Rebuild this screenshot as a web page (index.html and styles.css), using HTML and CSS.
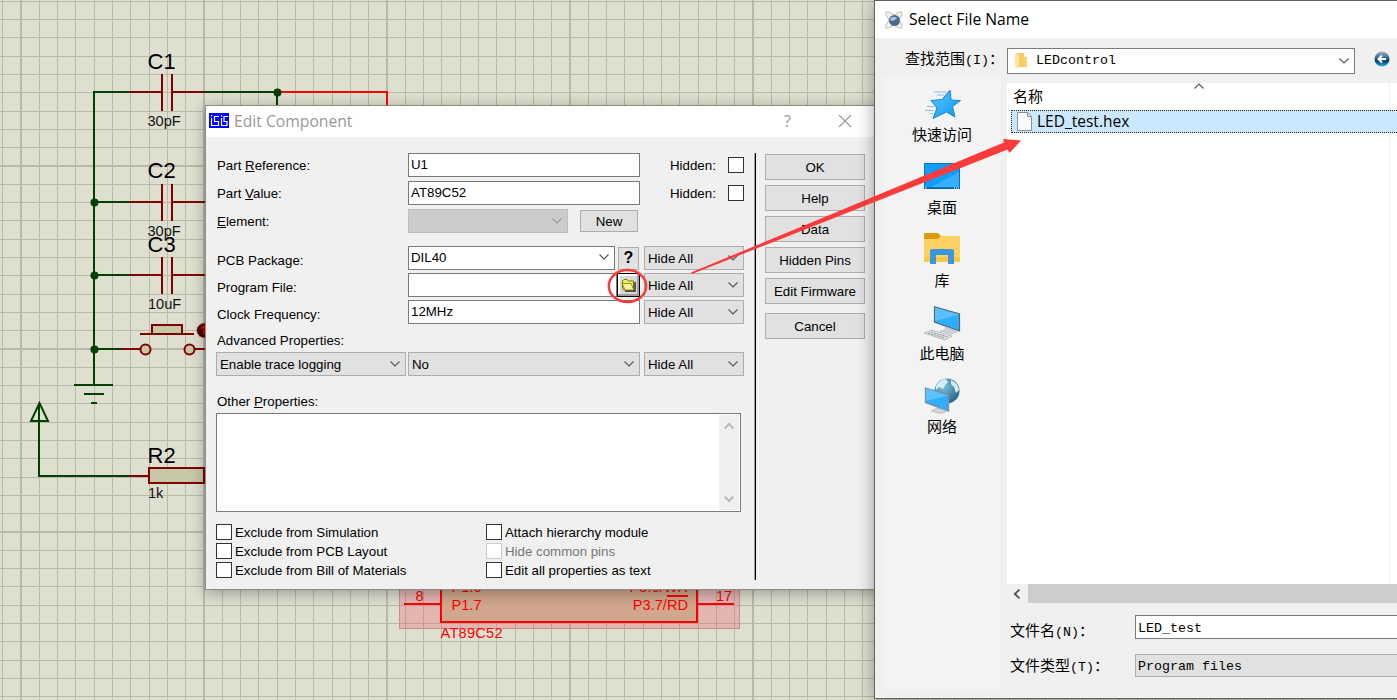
FILE: index.html
```html
<!DOCTYPE html>
<html lang="en">
<head>
  <meta charset="UTF-8" />
  <meta name="viewport" content="width=device-width, initial-scale=1" />
  <title>Edit Component</title>
  <link rel="stylesheet" href="styles.css">
</head>
<body>
  <div class="desktop">
    <svg class="schematic" width="1397" height="700" viewBox="0 0 1397 700">
      <defs>
        <pattern id="grid" x="21" y="166" width="183" height="183" patternUnits="userSpaceOnUse">
          <g fill="#b9b9a9" shape-rendering="crispEdges">
            <path d="M0 0h1v183h-1zM18 0h1v183h-1zM36 0h1v183h-1zM54 0h1v183h-1zM73 0h1v183h-1zM91 0h1v183h-1zM109 0h1v183h-1zM128 0h1v183h-1zM146 0h1v183h-1zM164 0h1v183h-1zM182 0h1v183h-1z" />
            <path d="M0 0h183v1h-183zM0 18h183v1h-183zM0 36h183v1h-183zM0 54h183v1h-183zM0 73h183v1h-183zM0 91h183v1h-183zM0 109h183v1h-183zM0 128h183v1h-183zM0 146h183v1h-183zM0 164h183v1h-183zM0 182h183v1h-183z" />
          </g>
        </pattern>
      </defs>
      <rect width="1397" height="700" fill="#dfdfd0" />
      <rect width="1397" height="700" fill="url(#grid)" />

      <!-- wires -->
      <g class="wire">
        <path d="M130 92H94V385M94 202H130M94 275H130M94 349H121M204 92H277V110" />
        <path d="M74 385H113M84 394H104M91 403H97" />
        <path d="M39 404V476H130M39.5 403L31 421H48Z" />
      </g>
      <g fill="#004000">
        <circle cx="94.500" cy="202.500" r="4" />
        <circle cx="94.500" cy="275.500" r="4" />
        <circle cx="94.500" cy="349.500" r="4" />
        <circle cx="277.500" cy="92.500" r="4" />
      </g>
      <path class="wire active" d="M281 92H387V110" />

      <!-- parts -->
      <g class="part">
        <path d="M129 92H162M172 92H205M162 74V111M172 74V111" />
        <path d="M129 202H162M172 202H205M162 184V221M172 184V221" />
        <path d="M129 275H162M172 275H205M162 257V294M172 257V294" />
        <path d="M121 349H141M194 349H206M140 334H194" />
        <rect x="152" y="325" width="30" height="9" />
        <circle cx="145.500" cy="349.500" r="5" />
        <circle cx="189.500" cy="349.500" r="5" />
        <path d="M129 476H149M204 476H206" />
        <rect x="149" y="468" width="55" height="15" />
      </g>
      <circle cx="204" cy="330.500" r="7" fill="#3a0000" stroke="#d00000" stroke-dasharray="1.500 1.500" />
      <path d="M204 335V327M201 329L204 326L207 329" fill="none" stroke="#f00" stroke-width="1.500" />
      <g class="name">
        <text x="147.500" y="69">C1</text>
        <text x="147.500" y="178">C2</text>
        <text x="147.500" y="252">C3</text>
        <text x="147.500" y="463">R2</text>
      </g>
      <g class="value">
        <text x="147.500" y="126">30pF</text>
        <text x="147.500" y="236">30pF</text>
        <text x="148" y="309">10uF</text>
        <text x="148" y="498">1k</text>
      </g>

      <!-- selected chip -->
      <rect x="399.500" y="400.500" width="340" height="228" fill="#f05a6e" fill-opacity=".3" stroke="#c98f86" />
      <rect x="441" y="400" width="256" height="222" fill="#d1a78d" stroke="#f00" stroke-width="2" />
      <path class="wire active" d="M404 604H441M697 604H734M667 596H688" />
      <g class="value pin">
        <text x="415.500" y="601">8</text>
        <text x="716" y="601">17</text>
        <text x="451.500" y="592">P1.6</text>
        <text x="451.500" y="610">P1.7</text>
        <text x="688" y="592" text-anchor="end">P3.6/WR</text>
        <text x="688" y="610" text-anchor="end">P3.7/RD</text>
        <text x="440.500" y="638" textLength="62">AT89C52</text>
      </g>
    </svg>

    <section class="window edit-window">
      <header class="titlebar">
        <svg class="isis-icon" width="20" height="15" viewBox="0 0 20 15">
          <rect width="20" height="15" fill="#00f" />
          <path d="M2.500 2V3.500M2.500 5V12.500H9.500V8.500H5.500V3.500H10M12.500 2V3.500M12.500 5V12.500H18V8.500H15V3.500H19" fill="none" stroke="#fff" stroke-width="1.200" />
        </svg>
        <h1>Edit Component</h1>
        <span class="help-mark">?</span>
        <svg class="close" width="14" height="14" viewBox="0 0 14 14"><path d="M1 1L13 13M13 1L1 13" fill="none" stroke="#999" stroke-width="1.100" /></svg>
      </header>

      <div class="edit-body">
        <form class="fields">
          <div class="row">
            <label>Part <u>R</u>eference:</label>
            <div class="input w-full">U1</div>
            <span class="hidden-label">Hidden:</span><i class="box"></i>
          </div>
          <div class="row">
            <label>Part <u>V</u>alue:</label>
            <div class="input w-full">AT89C52</div>
            <span class="hidden-label">Hidden:</span><i class="box"></i>
          </div>
          <div class="row element-row">
            <label><u>E</u>lement:</label>
            <div class="select w-element disabled"><svg class="chev" viewBox="0 0 10 6"><path d="M.5 .5L5 5L9.500 .5" /></svg></div>
            <div class="button new-button">New</div>
          </div>
          <div class="row low">
            <label>PCB Package:</label>
            <div class="input w-package">DIL40<svg class="chev" viewBox="0 0 10 6"><path d="M.5 .5L5 5L9.500 .5" /></svg></div>
            <div class="button query-button">?</div>
            <div class="select w-hide">Hide All<svg class="chev" viewBox="0 0 10 6"><path d="M.5 .5L5 5L9.500 .5" /></svg></div>
          </div>
          <div class="row low">
            <label>Program File:</label>
            <div class="input w-file"></div>
            <div class="folder-button">
              <svg width="16" height="14" viewBox="0 0 16 14">
                <path d="M4 13H14V4" fill="none" stroke="#222" stroke-width="1.400" />
                <path d="M1.500 10V3L3 1.500H6L7.500 3H12.500V12H3Z" fill="#f2ee52" stroke="#77770a" />
                <path d="M1 5.500H10L13 12H4Z" fill="#fbf09a" stroke="#77770a" stroke-width=".8" />
              </svg>
            </div>
            <div class="select w-hide">Hide All<svg class="chev" viewBox="0 0 10 6"><path d="M.5 .5L5 5L9.500 .5" /></svg></div>
          </div>
          <div class="row low">
            <label>Clock Frequency:</label>
            <div class="input w-full">12MHz</div>
            <div class="select w-hide">Hide All<svg class="chev" viewBox="0 0 10 6"><path d="M.5 .5L5 5L9.500 .5" /></svg></div>
          </div>
          <div class="caption">Advanced Properties:</div>
          <div class="row advanced">
            <div class="select w-name">Enable trace logging<svg class="chev" viewBox="0 0 10 6"><path d="M.5 .5L5 5L9.500 .5" /></svg></div>
            <div class="select w-full">No<svg class="chev" viewBox="0 0 10 6"><path d="M.5 .5L5 5L9.500 .5" /></svg></div>
            <div class="select w-hide">Hide All<svg class="chev" viewBox="0 0 10 6"><path d="M.5 .5L5 5L9.500 .5" /></svg></div>
          </div>
          <div class="caption other">Other <u>P</u>roperties:</div>
          <div class="textarea">
            <div class="scrollbar">
              <svg width="10" height="8" viewBox="0 0 10 8"><path d="M.7 6.500L5 2L9.300 6.500" /></svg>
              <svg width="10" height="8" viewBox="0 0 10 8"><path d="M.7 1.500L5 6L9.300 1.500" /></svg>
            </div>
          </div>
          <div class="checks">
            <div class="check"><i class="box"></i>Exclude from Simulation</div>
            <div class="check"><i class="box"></i>Attach hierarchy module</div>
            <div class="check"><i class="box"></i>Exclude from PCB Layout</div>
            <div class="check off"><i class="box"></i>Hide common pins</div>
            <div class="check"><i class="box"></i>Exclude from Bill of Materials</div>
            <div class="check"><i class="box"></i>Edit all properties as text</div>
          </div>
        </form>
        <div class="divider"></div>
        <div class="actions">
          <div class="button">OK</div>
          <div class="button">Help</div>
          <div class="button">Data</div>
          <div class="button">Hidden Pins</div>
          <div class="button">Edit Firmware</div>
          <div class="button cancel">Cancel</div>
        </div>
      </div>
    </section>

    <section class="window file-window">
      <header class="titlebar">
        <svg width="18" height="18" viewBox="0 0 18 18">
          <g fill="#f4f2ee" stroke="#cfcac2" stroke-width="1.300">
            <ellipse cx="9" cy="9" rx="11" ry="3.500" transform="rotate(45 9 9)" />
            <ellipse cx="9" cy="9" rx="11" ry="3.500" transform="rotate(-45 9 9)" />
          </g>
          <circle cx="9.500" cy="9.500" r="5.500" fill="#4a6a8c" />
          <path d="M5 8Q8 4 12 7Q10 10 6 10Z" fill="#a9c3dc" />
        </svg>
        <h1>Select File Name</h1>
      </header>
      <div class="lookin">
        <label class="song">查找范围<span>(I)</span>：</label>
        <div class="lookin-box">
          <svg width="13" height="17" viewBox="0 0 13 17">
            <path d="M1 1H9V15H1Z" fill="#f5cd66" />
            <path d="M9 5L12 4.500V15H9Z" fill="#f8d470" />
            <path d="M0 1L4 3V17L0 15Z" fill="#ffe59c" />
          </svg>
          <span class="song-latin">LEDcontrol</span>
          <svg class="chev" viewBox="0 0 10 6"><path d="M.5 .5L5 5L9.500 .5" /></svg>
        </div>
        <svg class="back" width="16" height="16" viewBox="0 0 16 16">
          <defs><linearGradient id="ball" x2="0" y2="1"><stop stop-color="#9db5c6" /><stop offset=".45" stop-color="#21628e" /><stop offset=".65" stop-color="#06406c" /><stop offset="1" stop-color="#2cb7ef" /></linearGradient></defs>
          <circle cx="8" cy="8" r="7.500" fill="url(#ball)" />
          <path d="M12 8H5M8 4.500L4.500 8L8 11.500" fill="none" stroke="#fff" stroke-width="2" />
        </svg>
      </div>
      <div class="file-main">
        <nav class="places">
          <div class="place">
            <svg width="38" height="32" viewBox="0 0 38 32">
              <defs><linearGradient id="sky" x2="1" y2="1"><stop stop-color="#5cc4ff" /><stop offset="1" stop-color="#0d98f5" /></linearGradient></defs>
              <path d="M27 2L28 12L37.500 12.500L29.500 18.500L32 29L23.500 24L10 30.500L14 20L8 12.500L19 11.500Z" fill="url(#sky)" stroke="#1784cb" />
              <path d="M11 4H23M14 7H21M4 18.500H11M2 22.500H10M7 25.500H10" stroke="#8ebfdf" />
            </svg>
            <span>快速访问</span>
          </div>
          <div class="place">
            <svg width="38" height="32" viewBox="0 1 38 32">
              <rect x="1.500" y="3.500" width="35" height="25" fill="#0f9dfc" stroke="#0873b8" />
              <path d="M8 27L36 12V27Z" fill="#35aefd" />
              <path d="M1 28H37" stroke="#06578e" />
              <path d="M2 28H3.500M31 28H32M33 28H34M35 28H36" stroke="#fff" />
            </svg>
            <span>桌面</span>
          </div>
          <div class="place">
            <svg width="38" height="32" viewBox="0 1 38 32">
              <path d="M1 1Q1 0 2 0H15L18 3V6H1Z" fill="#dd9a03" />
              <path d="M1 6H15L18 3H36Q37 3 37 4V28Q37 29 36 29H2Q1 29 1 28Z" fill="#fdd261" />
              <path d="M1 24H37V28Q37 29 36 29H2Q1 29 1 28Z" fill="#fbc741" />
              <path d="M7 31V18Q7 16 9 16H29Q31 16 31 18V31H25V22H13V31Z" fill="#3a96dd" />
            </svg>
            <span>库</span>
          </div>
          <div class="place">
            <svg width="38" height="34" viewBox="0 0 38 34">
              <path d="M11.500 .8L36.500 8V25L11.500 16Z" fill="#2faeff" stroke="#56656f" stroke-width="1.200" />
              <path d="M12 1.500L36 8.500L12 15Z" fill="#5ac0ff" />
              <path d="M22 21L29 23.500L34 26L28 28L17 25L22 24Z" fill="#cfd5da" stroke="#a5adb3" stroke-width=".5" />
              <path d="M1 27L9 24L29 30L22 34Z" fill="#dfe3e6" stroke="#a4abb0" stroke-width=".7" />
              <path d="M5 27L22 32M8 26L25 31" stroke="#8b9399" stroke-dasharray="2 1" />
            </svg>
            <span>此电脑</span>
          </div>
          <div class="place">
            <svg width="38" height="36" viewBox="0 0 38 36">
              <defs><radialGradient id="globe" cx=".35" cy=".3" r=".8"><stop stop-color="#7fc3de" /><stop offset="1" stop-color="#215f86" /></radialGradient></defs>
              <circle cx="24" cy="13" r="12.500" fill="url(#globe)" />
              <path d="M13 8Q17 1 23 1L25 4L22 7L20 11L16 9L13 12ZM28 2Q35 5 36 12L33 15L31 9L28 6Z" fill="#d5eef3" />
              <path d="M2.500 10L25.500 17V33L2.500 24.500Z" fill="#2faeff" stroke="#7f8d96" stroke-width="1.300" />
              <path d="M3 10.500L25 17.500L3 23Z" fill="#5ac0ff" />
              <path d="M14 30L21 32L23 34L17 35.500L8 33Z" fill="#cfd5da" stroke="#9da5ab" stroke-width=".5" />
            </svg>
            <span>网络</span>
          </div>
        </nav>
        <div class="browser">
          <div class="list">
            <div class="list-head">
              <span>名称</span>
              <svg class="sort" width="10" height="6" viewBox="0 0 10 6"><path d="M.5 5.500L5 1L9.500 5.500" /></svg>
            </div>
            <div class="file-item">
              <svg width="15" height="19" viewBox="0 0 15 19">
                <path d="M.5 .5H10.500L14.500 4.500V18.500H.5Z" fill="#fafafa" stroke="#8f8f8f" />
                <path d="M10.500 .5V4.500H14.500" fill="none" stroke="#8f8f8f" />
              </svg>
              <span>LED_test.hex</span>
            </div>
          </div>
          <div class="hscroll">
            <svg width="8" height="10" viewBox="0 0 8 10"><path d="M6.500 .7L1.800 5L6.500 9.300" fill="none" stroke="#505050" stroke-width="1.800" /></svg>
            <div class="thumb"></div>
          </div>
          <div class="file-row">
            <label class="song">文件名<span>(N)</span>：</label>
            <div class="file-input song-latin">LED_test</div>
          </div>
          <div class="file-row type">
            <label class="song">文件类型<span>(T)</span>：</label>
            <div class="file-input grey song-latin">Program files</div>
          </div>
        </div>
      </div>
    </section>

    <!-- red marker over both windows -->
    <svg class="marker" width="1397" height="700" viewBox="0 0 1397 700">
      <ellipse cx="627.500" cy="286" rx="18.700" ry="16" fill="none" stroke="#fb3b3b" stroke-width="2.500" />
      <path d="M691 272.500L1004 142.500L1003 139L1021 140.500L1009.500 153L1007.500 149.500L692 274Z" fill="#fb3b3b" />
    </svg>
  </div>
</body>
</html>
```
FILE: styles.css
```css
:root {
  --face: #f0f0f0;
  --control: #e1e1e1;
  --border: #adadad;
  --input-border: #7a7a7a;
}

* {
  box-sizing: border-box;
}

body {
  margin: 0;
  font-family: "Liberation Sans", Arial, sans-serif;
  font-size: 13.3px;
  color: #000;
}

.desktop {
  position: relative;
  width: 1397px;
  height: 700px;
  overflow: hidden;
}

.schematic {
  display: block;
}

.marker {
  position: absolute;
  top: 0;
  left: 0;
}

/* Schematic */
.wire {
  fill: none;
  stroke: #004000;
  stroke-width: 2;
}

.wire.active {
  stroke: #f00;
}

.part {
  fill: #c8c8a8;
  stroke: #800000;
  stroke-width: 2;
}

.name {
  font-size: 22px;
}

.value {
  font-size: 14.6px;
  fill: #111;
}

.value.pin {
  fill: #f00;
}

/* Windows */
.window {
  position: absolute;
  display: flex;
  flex-direction: column;
  background: var(--face);
  border: 1px solid #777;
}

.edit-window {
  left: 205px;
  top: 105px;
  width: 680px;
  height: 485px;
  border-color: #8c8c88;
  box-shadow: 0 3px 14px rgba(0, 0, 0, 0.33);
}

.file-window {
  left: 874px;
  top: 0;
  width: 540px;
  height: 699px;
  border-color: #62625c;
  box-shadow: 0 3px 16px rgba(0, 0, 0, 0.38);
}

.titlebar {
  display: flex;
  align-items: center;
  background: #fff;
  font-family: "Open Sans", "Noto Sans", sans-serif;
}

.titlebar h1 {
  margin: 0;
  padding-bottom: 2px;
  font-size: 15.7px;
  font-weight: 400;
}

.edit-window .titlebar {
  height: 31px;
  padding-left: 3px;
  color: #999;
}

.edit-window h1 {
  width: 550px;
  margin-left: 5px;
}

.isis-icon {
  margin-top: -2px;
}

.help-mark {
  width: 54px;
  padding-bottom: 2px;
  font-size: 16px;
}

.close {
  margin-bottom: 1px;
}

.file-window .titlebar {
  height: 37px;
  padding-left: 10px;
  gap: 6px;
}

/* Edit component form */
.edit-body {
  display: flex;
  padding: 16px 0 0 10px;
}

.fields {
  width: 529px;
}

.row {
  display: flex;
  align-items: center;
  height: 24px;
  margin-bottom: 4px;
}

.row label {
  width: 192px;
  padding-left: 1px;
}

.element-row {
  margin-bottom: 13px;
}

.low {
  margin-bottom: 3px;
}

.low label {
  padding-top: 5px;
}

.low:nth-of-type(6) {
  margin-bottom: 0;
}

.input,
.select {
  display: flex;
  align-items: center;
  height: 24px;
  padding: 0 5px 0 3px;
  border: 1px solid var(--border);
  background: var(--control);
}

.input {
  padding: 0 5px 2px 2px;
  border-color: var(--input-border);
  background: #fff;
}

.select.disabled {
  background: #ccc;
  border-color: #bfbfbf;
}

.chev {
  width: 10px;
  height: 6px;
  margin-left: auto;
}

.chev path,
.sort path {
  fill: none;
  stroke: #555;
  stroke-width: 1.1;
}

.disabled .chev path {
  stroke: #999;
}

.w-full { width: 232px; }
.w-element { width: 160px; }
.w-package { width: 207px; }
.w-file { width: 209px; }
.w-hide { width: 100px; margin-left: 4px; }
.w-name { width: 190px; margin-right: 2px; }

.hidden-label {
  width: 58px;
  margin-left: 30px;
}

.box {
  width: 16px;
  height: 16px;
  border: 1px solid #333;
  background: #fff;
}

.button {
  display: flex;
  align-items: center;
  justify-content: center;
  height: 26px;
  border: 1px solid var(--border);
  background: var(--control);
}

.new-button {
  width: 58px;
  height: 22px;
  margin-left: 12px;
}

.query-button {
  width: 21px;
  height: 23px;
  margin: 0 1px 0 3px;
  font-size: 16px;
  font-weight: 700;
}

.folder-button {
  display: flex;
  align-items: center;
  justify-content: center;
  width: 23px;
  height: 24px;
  border: 1px solid #000;
  background: #d8d8d8;
  box-shadow: inset -2px -2px #a0a0a0, inset 2px 2px #fff;
}

.caption {
  height: 28px;
  padding: 9px 0 0 1px;
}

.advanced {
  margin: 0;
}

.caption.other {
  height: 37px;
  padding-top: 18px;
}

.textarea {
  width: 525px;
  height: 99px;
  padding: 1px;
  border: 1px solid var(--input-border);
  background: #fff;
}

.scrollbar {
  display: flex;
  flex-direction: column;
  align-items: center;
  justify-content: space-between;
  width: 20px;
  height: 95px;
  margin-left: auto;
  padding: 7px 0;
  background: var(--face);
}

.scrollbar path {
  fill: none;
  stroke: #bbb;
  stroke-width: 2;
}

.checks {
  display: grid;
  grid-template-columns: 270px 1fr;
  row-gap: 3px;
  margin-top: 12px;
}

.check {
  display: flex;
  align-items: center;
  gap: 3px;
  height: 16px;
}

.off {
  color: #777;
}

.off .box {
  border-color: #ccc;
}

.divider {
  width: 2px;
  height: 427px;
  margin: 0 9px 0 9px;
  background: #000;
  border-left: 1px solid #a0a0a0;
}

.actions {
  display: flex;
  flex-direction: column;
  gap: 5px;
  width: 100px;
  padding-top: 1px;
}

.cancel {
  margin-top: 4px;
}

/* File picker */
.song {
  font-family: "Noto Sans CJK SC", sans-serif;
  font-size: 15px;
  line-height: 20px;
  white-space: nowrap;
}

.song span,
.song-latin {
  font-family: "Liberation Mono", monospace;
  font-size: 13.33px;
}

.lookin {
  display: flex;
  align-items: center;
  height: 45px;
  padding: 0 0 2px 30px;
}

.lookin label {
  width: 102px;
}

.lookin-box {
  display: flex;
  align-items: center;
  width: 348px;
  height: 26px;
  margin: 2px 19px 0 0;
  padding: 0 5px 0 7px;
  gap: 8px;
  border: 1px solid var(--input-border);
  background: #fff;
}

.back {
  margin-bottom: 2px;
}

.file-main {
  display: flex;
  padding-left: 8px;
}

.places {
  width: 118px;
  height: 613px;
  margin: -6px 6px 0 0;
  padding-top: 9px;
  background: #f3f3f3;
}

.place {
  display: flex;
  flex-direction: column;
  align-items: center;
  gap: 2px;
  height: 73px;
  font-family: "Noto Sans CJK SC", sans-serif;
  font-size: 15px;
  line-height: 20px;
}

.place svg {
  height: 36px;
}

.browser {
  flex: 1;
}

.list {
  height: 501px;
  background: #fff linear-gradient(#e8f1fa, #e8f1fa) 382px 0 / 1px 100% no-repeat;
  font-family: "Open Sans", "Noto Sans CJK SC", sans-serif;
  font-size: 15.5px;
}

.list-head {
  display: flex;
  height: 27px;
  padding-left: 6px;
  font-size: 15px;
  line-height: 27px;
}

.sort {
  margin-left: 151px;
}

.file-item {
  display: flex;
  align-items: center;
  gap: 5px;
  height: 23px;
  margin-left: 4px;
  padding-left: 5px;
  background: #cce8ff;
  border: 1px dotted #222;
}

.file-item span {
  padding-bottom: 2px;
}

.hscroll {
  display: flex;
  align-items: center;
  height: 19px;
  padding-left: 6px;
}

.thumb {
  flex: 1;
  height: 19px;
  margin-left: 7px;
  background: #cdcdcd;
}

.file-row {
  display: flex;
  align-items: center;
  height: 24px;
  margin-top: 12px;
  padding-left: 3px;
}

.file-row label {
  width: 125px;
  padding-top: 8px;
}

.file-input {
  display: flex;
  flex: 1;
  align-items: center;
  height: 24px;
  padding: 2px 0 0 2px;
  border: 1px solid var(--input-border);
  background: #fff;
}

.file-input.grey {
  height: 23px;
  border-color: var(--border);
  background: var(--control);
}

.file-row.type {
  margin-top: 14px;
}

.type label {
  padding-top: 2px;
}
```
